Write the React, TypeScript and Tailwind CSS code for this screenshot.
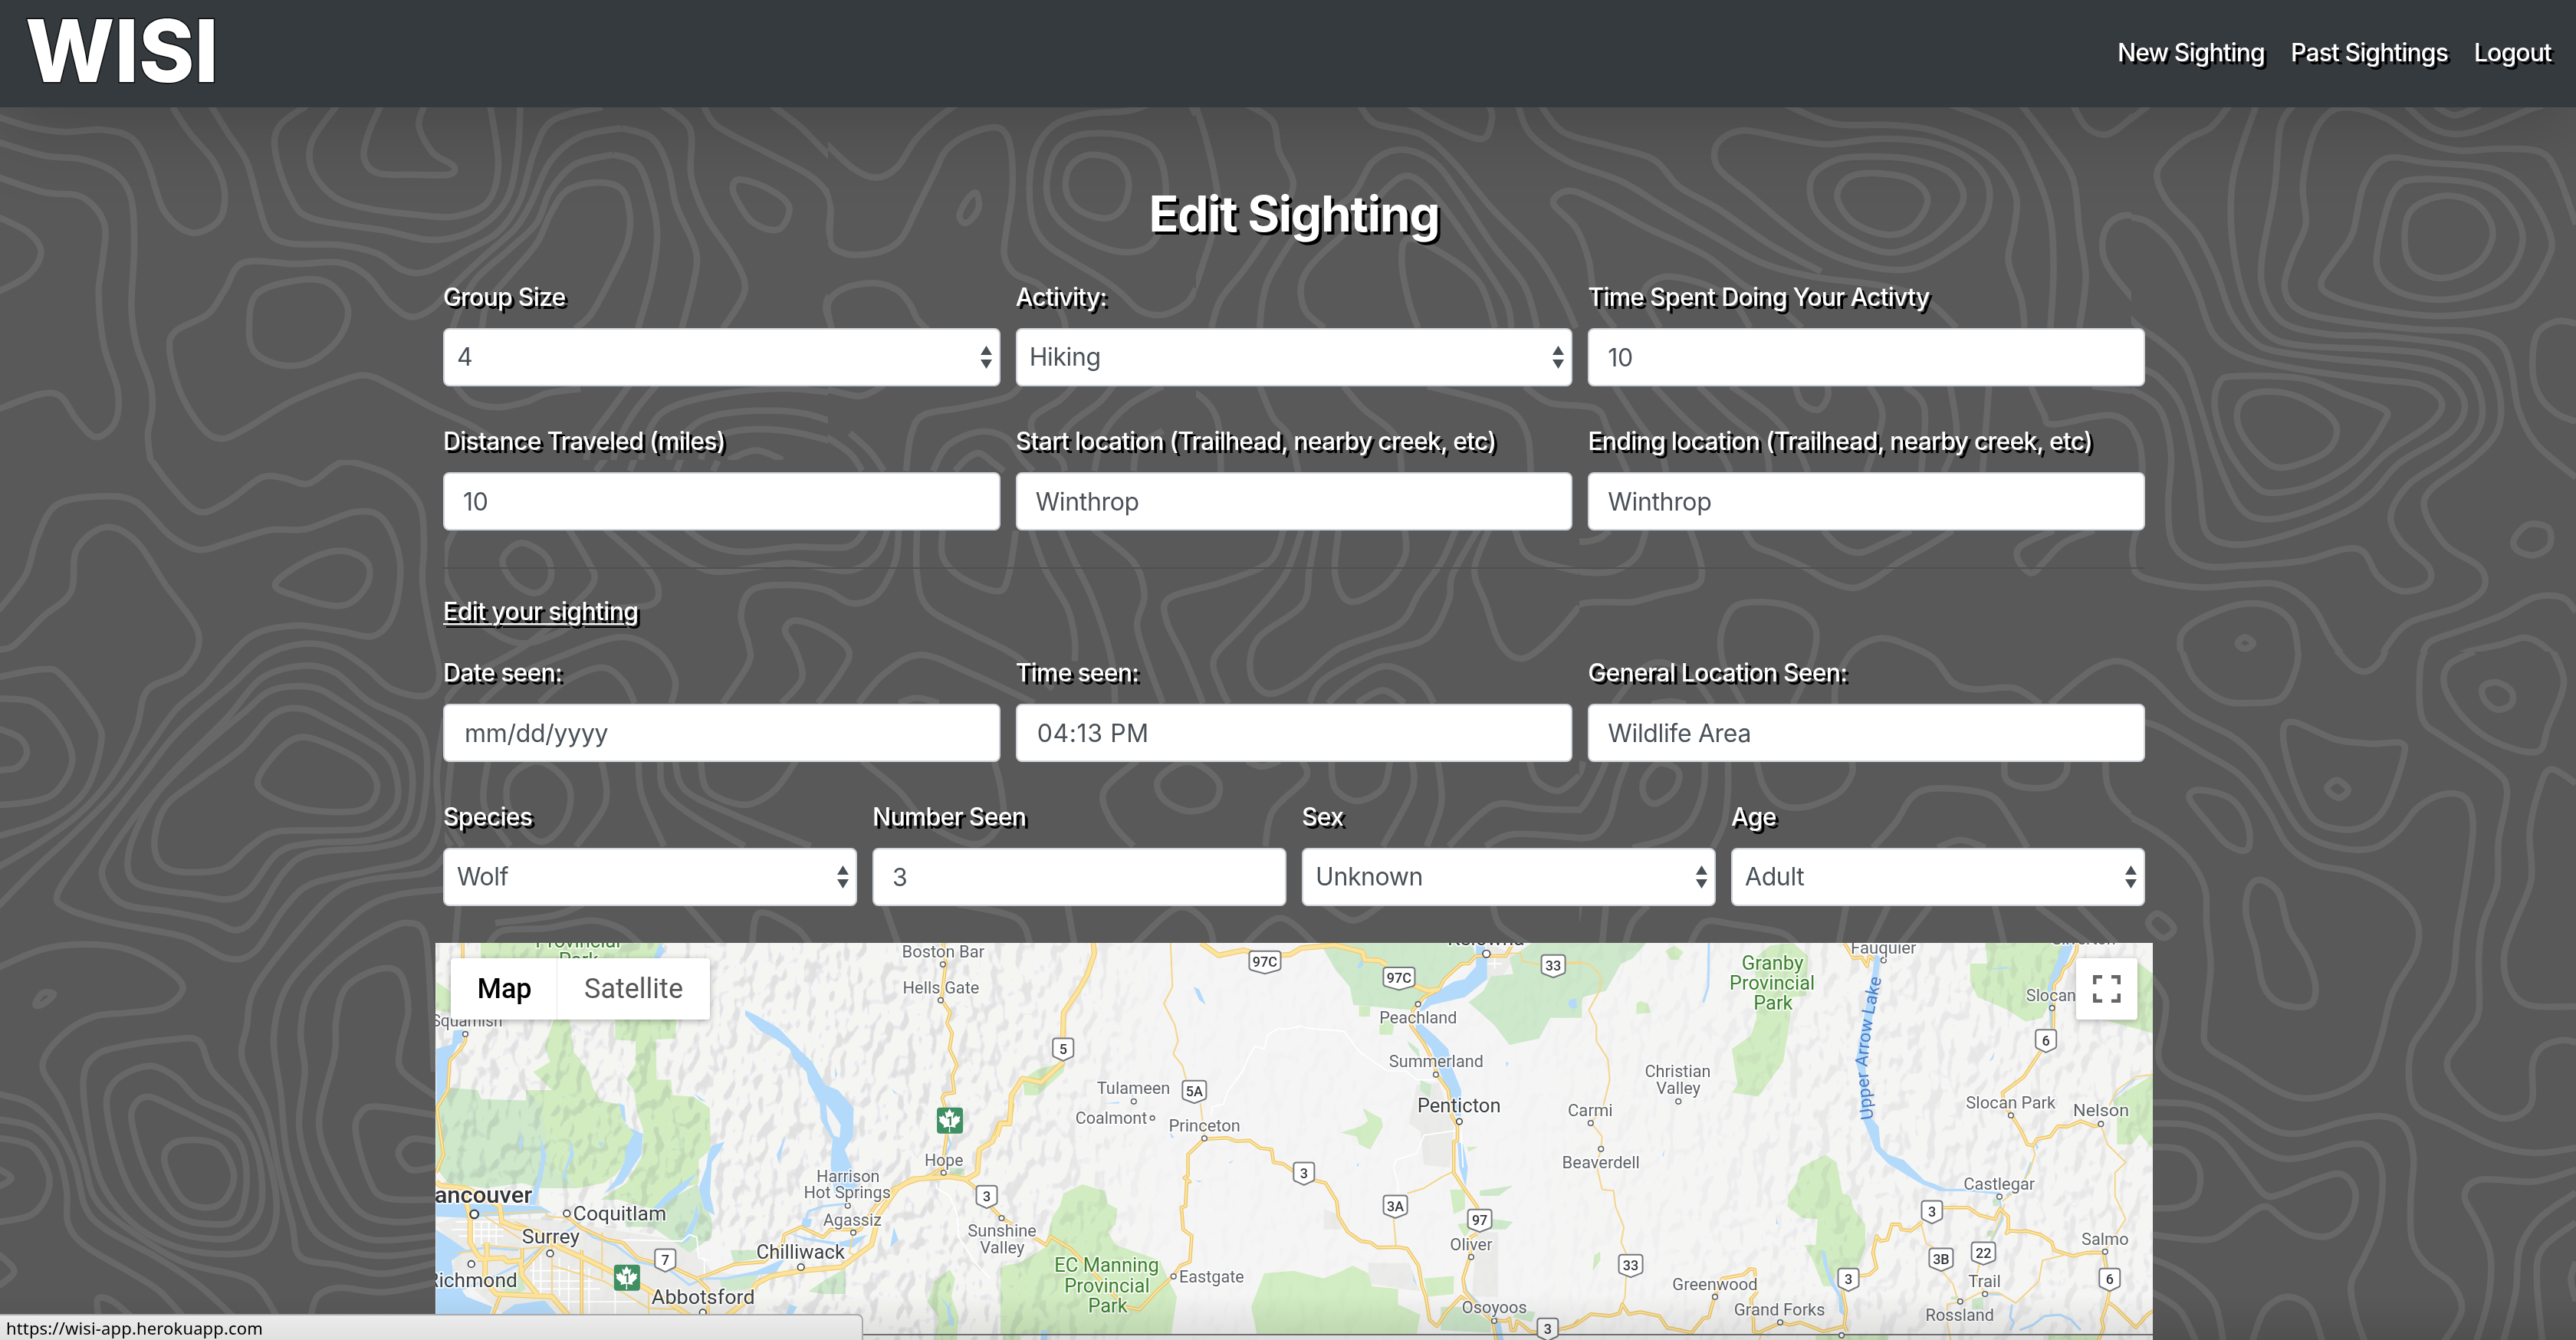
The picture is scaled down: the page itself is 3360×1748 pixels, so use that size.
import React from "react";
import { FaCanadianMapleLeaf } from "react-icons/fa";

type Pt = [number, number];

/** A sheet is a drawing board with its own units, scaled onto the page. */
type Sheet = { x: number; y: number; sx: number; sy: number };

const parse = (s: string): { pts: Pt[]; closed: boolean } => {
  const closed = s.trim().endsWith("z");
  const pts = s
    .replace("z", "")
    .trim()
    .split(/\s+/)
    .map((p) => p.split(",").map(Number) as Pt);
  return { pts, closed };
};

/** Catmull-Rom spline through the points. */
const smooth = (s: string): string => {
  const { pts, closed } = parse(s);
  const n = pts.length;
  const at = (i: number): Pt =>
    closed ? pts[(i + n) % n] : pts[Math.max(0, Math.min(n - 1, i))];
  let d = `M${pts[0][0]} ${pts[0][1]}`;
  const last = closed ? n : n - 1;
  for (let i = 0; i < last; i++) {
    const [a, b, c, e] = [at(i - 1), at(i), at(i + 1), at(i + 2)];
    d += `C${b[0] + (c[0] - a[0]) / 6} ${b[1] + (c[1] - a[1]) / 6} ${c[0] - (e[0] - b[0]) / 6} ${
      c[1] - (e[1] - b[1]) / 6
    } ${c[0]} ${c[1]}`;
  }
  return d + (closed ? "Z" : "");
};

const straight = (s: string, close = false): string => {
  const { pts } = parse(s);
  return "M" + pts.map((p) => p.join(" ")).join("L") + (close ? "Z" : "");
};

const tf = (s: Sheet) => `translate(${s.x} ${s.y}) scale(${s.sx} ${s.sy})`;

/* ---------- Topographic backdrop ---------- */

const contours: { id: string; sheet: Sheet; clip: string; lines: string[] }[] = [
  {
    id: "nw",
    sheet: { x: 0, y: 0, sx: 0.7143, sy: 0.3827 },
    clip: "M0 140H1080V600H0Z",
    lines: [
      "-10,395 60,435 120,450 185,442 240,470 270,560 300,720 350,793 400,750 410,650 390,550 345,450 315,365",
      "-10,480 80,530 150,543 210,590 240,680 245,850 240,1050 250,1180 275,1310 278,1400 270,1480 275,1570",
      "-10,600 80,655 150,672 190,760 188,880 180,1000 190,1180 215,1330 210,1440 175,1490 140,1430 110,1350 70,1345 -10,1400",
      "-10,735 50,790 75,860 50,940 -10,1000",
      "385,360 415,450 450,550 470,680 490,790 530,830 620,835 690,865 735,920 780,925 850,855 910,790 950,680 975,520 1010,410 1100,365",
      "560,360 510,430 503,520 530,670 570,745 700,785 790,818 870,780 925,680 945,520 950,360",
      "615,360 570,480 570,580 610,670 670,710 760,732 830,738 890,690 910,560 895,360",
      "695,360 672,460 665,540 690,590 760,595 820,595 828,565 790,520 765,430 775,360",
      "1210,360 1260,440 1262,600 1290,740 1340,880 1360,990 1320,1120",
      "1135,437 1060,465 1005,550 970,690 940,780 880,880 830,970 790,1050 750,1080 710,1030 670,940 620,895 540,900 445,895 410,990 380,1070 320,1130 310,1200 330,1340 370,1460 405,1495 450,1460 530,1370 620,1300 670,1280 720,1320 790,1390 860,1450 920,1520",
      "1135,437 1190,470 1220,570 1235,700 1270,850 1268,950 1245,1120",
      "1120,527 1050,560 1005,650 980,760 930,850 870,950 840,1050 825,1130",
      "1120,527 1165,560 1190,680 1200,800 1190,950 1165,1120",
      "880,1120 890,1030 930,940 980,830 1005,730 1035,650 1090,622 1135,645 1150,730 1145,830 1115,950 1080,1070 1050,1120",
      "545,955 600,965 635,1050 620,1150 570,1230 515,1245 465,1200 455,1110 470,1000z",
      "1285,360 1310,430 1400,520 1480,600 1515,680 1515,800 1540,870 1600,880",
      "1410,360 1460,430 1520,540 1570,600",
      "1350,612 1400,640 1440,700 1430,770 1405,783 1370,750 1345,680 1338,640z",
      "1568,970 1520,1000 1508,1050 1520,1120",
      "830,1310 860,1370 910,1388 960,1370 1000,1340 1060,1325",
      "1150,1310 1115,1400 1080,1490 1070,1570",
      "1200,1310 1160,1400 1130,1500 1120,1570",
      "1568,1350 1440,1325 1330,1340 1230,1385 1190,1450 1170,1568",
      "1568,1470 1470,1410 1380,1400 1290,1425 1240,1500 1220,1568",
      "1568,1530 1440,1470 1340,1470 1290,1520 1280,1568",
      "1330,1568 1380,1535 1430,1568",
    ],
  },
  {
    id: "n1",
    sheet: { x: 1080, y: 130, sx: 0.3333, sy: 0.3333 },
    clip: "M1080 140H1560V430H1080Z",
    lines: [
      "-10,170 100,270 190,305 270,265 340,160 420,80 500,20",
      "-10,350 10,430 10,560 60,600 130,607 220,590 290,540 350,420 420,280 460,200 540,140 650,108 700,140 720,230 720,370 700,500 690,610 730,680 820,720 880,780 920,850 930,900",
      "580,365 590,420 560,470 530,482 515,450 545,390z",
      "1250,20 1170,45 1020,55 900,90 830,160 795,260 790,400 810,500 860,570 960,635 1070,700 1150,760 1220,825 1310,842 1400,800 1440,740",
      "1020,133 1150,138 1250,170 1300,230 1322,340 1310,480 1260,570 1180,597 1080,580 960,520 880,440 855,340 880,220 940,155z",
      "1040,215 1130,240 1175,310 1165,400 1120,455 1060,462 980,430 935,370 935,290 975,235z",
      "15,900 0,800 60,740 180,718 270,745 320,800 350,860 390,900",
      "1420,20 1440,60",
    ],
  },
  {
    id: "n2",
    sheet: { x: 560, y: 200, sx: 0.6378, sy: 0.3316 },
    clip: "M1080 430H1560V692H580V600H1080Z",
    lines: [
      "1210,911 1180,960 1090,1000 1010,1030 985,1110 975,1250",
      "1320,911 1290,970 1235,1040 1240,1120 1290,1200 1300,1250",
      "1400,911 1370,980 1320,1050 1290,1110",
      "1500,915 1430,990 1380,1100 1360,1250",
      "1500,1090 1450,1160 1440,1250",
      "1030,1250 1060,1150 1125,1095 1180,1120 1210,1200 1235,1250",
      "1075,1250 1100,1200 1125,1180 1155,1220 1175,1250",
      "930,911 880,955 800,925 700,920",
      "860,1100 900,1170 930,1250",
      "800,1100 860,1180 885,1250",
      "340,1250 360,1200",
      "410,1250 420,1200",
      "505,1250 515,1200",
      "580,1250 590,1210",
    ],
  },
  {
    id: "ne",
    sheet: { x: 1500, y: 140, sx: 0.8418, sy: 0.3571 },
    clip: "M1560 140H2780V692H1560Z",
    lines: [
      "70,-10 85,100 100,250 105,380 85,550 60,700 20,760",
      "150,-10 190,50 200,160 222,280 200,400 150,580 110,700 95,806",
      "170,806 175,700 190,600 240,430 310,330 345,200 390,155 440,200 480,320 530,500 580,650 600,806",
      "270,806 240,740 235,640 260,550 330,400 365,300 400,250 440,320 490,480 550,700 560,806",
      "415,806 400,700 390,560 400,480 450,530 510,640 535,806",
      "325,-10 350,60 420,100 470,200 530,370 600,540 640,700 660,806",
      "400,-10 460,70 515,115 530,40 525,-10",
      "570,-10 590,100 650,200 730,270 800,370 880,480 950,570 1030,620 1130,650 1200,700 1250,806",
      "605,-10 640,90 710,140 780,190 820,290 880,370 960,500 1040,600",
      "920,85 880,130 880,220 930,320 980,420 1040,520 1110,580 1180,590 1240,520 1290,420 1300,290 1270,190 1210,130 1130,115 1050,135 990,115z",
      "1110,180 1180,190 1240,240 1260,340 1220,460 1170,520 1130,525 1070,460 1030,370 1025,260 1060,195z",
      "1120,240 1180,265 1205,340 1180,440 1140,465 1090,420 1065,330 1080,260z",
      "985,-10 1060,60 1150,65 1220,90 1300,180 1340,310 1340,430 1330,560 1350,700 1355,806",
      "1240,-10 1330,80 1370,230 1395,400 1400,600 1395,806",
      "1350,-10 1395,130 1430,260 1440,450 1450,620 1440,806",
      "1430,-10 1450,70 1480,100 1510,60 1540,-10",
      "1568,415 1510,395 1480,450 1480,560 1520,690 1568,800",
      "720,806 690,700 680,560 660,440 625,350 650,305 700,350 770,440 860,540 920,650 960,700 1010,806",
      "790,806 765,680 795,620 850,640 900,700 930,806",
      "0,1050 40,1025 80,1060 105,1150 110,1333",
      "170,1018 190,1130 215,1200 230,1333",
      "300,1018 330,1100 380,1200 390,1333",
      "430,1018 500,1060 560,1110 585,1200 590,1333",
      "580,1018 620,1080 690,1100 710,1180 740,1333",
      "720,1018 760,1160 790,1250 800,1333",
      "780,1018 830,1140 880,1250 900,1333",
      "850,1018 900,1130 950,1230 960,1333",
      "900,1018 960,1120 1000,1230 1020,1333",
      "1000,1018 1010,1080 1035,1105 1050,1060 1050,1018",
      "1115,1018 1135,1130 1110,1333",
      "1170,1018 1200,1100 1195,1333",
      "1240,1018 1250,1200 1230,1333",
      "1300,1018 1290,1333",
      "1365,1018 1385,1120 1400,1158 1490,1125 1530,1200 1535,1333",
      "1460,1018 1568,1050",
    ],
  },
  {
    id: "e1",
    sheet: { x: 2780, y: 0, sx: 0.3699, sy: 0.574 },
    clip: "M2780 140H3360V850H2780Z",
    lines: [
      "-10,275 60,240",
      "345,240 280,290 200,315 120,360 90,400 130,460 230,530 300,620 350,710 420,770 500,797 700,815 950,830 1100,855 1175,915 1130,980 950,1050 850,1120 750,1165 550,1215 380,1238 270,1215 245,1140 235,1080 180,930 100,860 40,838",
      "670,640 720,590 780,530 820,420 900,360 1050,370 1280,385 1400,440 1480,540 1460,600 1380,680 1300,703 1080,718 850,700 700,670z",
      "1568,510 1500,390 1440,345 1300,338 1150,342 1020,320 900,270 780,245 700,255 640,310 605,420 615,510 570,580 540,650 580,700 700,725 1000,748 1200,753 1300,780 1340,840 1365,930 1430,1010 1568,1085",
      "570,240 525,290 505,430 460,590 470,670 540,735 700,760 900,765 1150,785 1250,820 1300,900 1290,980 1200,1045 1060,1110 1035,1160 1110,1240 1230,1290 1240,1340 1150,1380 980,1415 900,1470 850,1525 790,1515 710,1460 640,1380 530,1330 400,1328 250,1335 100,1322 15,1300 5,1240 20,1205",
      "440,240 360,400 355,540 400,680 480,760 600,785 850,793 1050,805 1180,840 1235,910 1220,980 1120,1040 980,1100 915,1170 950,1230 1050,1290 1040,1330 950,1343 870,1310 820,1255 750,1248 600,1275 400,1285 250,1285 150,1240 130,1150 140,1030 100,930 0,885",
      "-10,493 60,505 150,560 230,660 290,760 400,810 600,840 850,862 1020,875 1095,915 1050,965 900,1030 770,1110 620,1160 470,1180 380,1150 300,1040 240,920 190,830 100,775 30,745 -10,720",
      "370,855 600,860 750,895 890,930 890,960 800,1040 650,1100 500,1120 430,1100 340,1020 295,930 310,870z",
      "480,890 580,900 690,940 725,980 680,1030 530,1063 450,1035 385,980 375,930 410,900z",
      "1100,445 1220,465 1275,530 1220,600 1100,632 1000,610 965,560 985,480z",
      "1000,408 1200,415 1310,450 1380,535 1330,620 1200,670 1050,680 920,655 865,600 890,500 930,430z",
      "970,240 1060,290 1150,305 1250,290 1400,250 1450,240",
      "1070,240 1140,262 1230,240",
      "1568,735 1500,730 1430,760 1415,840 1440,900 1500,940 1568,958",
      "1400,1192 1470,1200 1475,1240 1420,1262 1360,1250 1350,1225z",
      "590,1500 570,1420 500,1380 400,1372 280,1395 190,1430 172,1470 200,1540",
      "400,1448 430,1462 400,1475 375,1462z",
      "-10,960 30,1010 40,1080",
      "1568,1390 1520,1358 1420,1358 1300,1400 1150,1435 1050,1460 1020,1500",
      "1110,1540 1150,1490 1300,1465 1400,1450 1490,1490 1525,1540",
    ],
  },
  {
    id: "e2",
    sheet: { x: 2780, y: 850, sx: 0.3699, sy: 0.5727 },
    clip: "M2780 850H3360V1748H2780Z",
    lines: [
      "175,-10 220,60 320,110 430,117 530,105 580,40 590,-10",
      "715,-10 780,35 830,45 880,20 900,-10",
      "1040,-10 1018,40 1025,150 1100,195 1280,270 1325,320 1295,430 1290,530 1240,620 1225,700 1225,820 1180,870 1115,930 1140,980 1240,1045 1330,1063 1410,1030 1415,940 1450,900 1520,885 1568,890",
      "1210,0 1120,30 1105,80 1170,150 1280,205 1430,228 1470,170 1525,70 1480,-10",
      "1290,70 1340,90 1340,120 1290,132 1245,110 1240,80z",
      "-10,25 80,65 200,140 360,195 450,250 520,330 600,410 720,445 850,448 940,410 1010,355 1100,325 1180,335 1205,400 1180,530 1150,640 1130,750 1050,840 990,900 980,980 1010,1040 1120,1075 1280,1125 1430,1142 1568,1130",
      "45,160 110,175 240,225 380,280 480,360 550,440 650,485 800,505 940,555 1010,620 1000,690 920,780 880,880 830,960 720,1005 600,1017 500,995 380,945 270,900 258,850 280,720 265,620 260,540 200,470 100,415 -10,375",
      "570,160 720,200 850,210 950,208 960,240 900,350 830,395 740,405 640,380 570,290 535,190z",
      "725,293 765,315 730,333 690,312z",
      "240,315 350,335 410,390 410,450 340,440 270,390 205,335z",
      "455,520 520,550 555,630 620,700 650,770 620,808 520,800 465,760 440,680 405,600 415,540z",
      "95,597 150,630 110,652 60,620z",
      "70,740 120,790 115,850 95,920 140,965 300,1010 400,1050 500,1090 600,1097 750,1070 880,1058 960,1080 995,1150 985,1250 990,1340 1040,1395 1130,1440 1165,1500 1100,1575",
      "70,1027 200,1030 300,1055 420,1120 520,1153 620,1150 760,1123 840,1130 885,1190 870,1300 820,1380 775,1440 790,1510 825,1575",
      "70,1075 200,1078 310,1110 400,1180 470,1237 530,1235 640,1205 740,1190 790,1230 770,1290 700,1330 610,1325 530,1290 480,1265 430,1275 330,1325 250,1340 70,1328",
      "70,1128 180,1135 240,1180 230,1240 170,1265 70,1268",
      "70,1382 180,1415 290,1480 325,1575",
      "70,1458 170,1500 230,1575",
      "425,1575 470,1500 550,1470 630,1495 675,1575",
      "1568,1180 1420,1207 1230,1203 1175,1240 1220,1300 1265,1370 1260,1470 1215,1575",
      "1568,1232 1440,1290 1370,1360 1355,1460 1310,1575",
      "1568,1300 1450,1360 1430,1430 1450,1575",
      "1568,1390 1550,1430 1568,1480",
      "1568,300 1480,268 1440,310 1405,410 1410,520 1350,620 1315,690 1330,760 1400,805 1568,808",
    ],
  },
  {
    id: "sw",
    sheet: { x: 0, y: 600, sx: 0.3699, sy: 0.7321 },
    clip: "M0 600H580V1748H0Z",
    lines: [
      "520,-10 600,45 700,92 800,75 920,32 1000,32 1090,42 1200,5 1300,12 1400,35 1480,80 1495,150 1490,220 1520,310 1550,385 1500,420 1380,408 1290,370 1180,335 1060,328 930,350 820,400 700,450 600,500 480,580 330,680 205,770 240,800 400,825 650,850 800,888 900,875 1000,800 1100,755 1300,732 1480,710 1545,650 1540,560 1568,460",
      "-5,268 90,205 130,140 200,80 350,65 480,75 600,135 700,160 800,148 950,125 1080,123 1250,93 1350,105 1410,180 1390,270 1320,313 1200,305 1050,295 900,310 800,355 720,402 620,445 520,515 400,595 250,670 120,730 -5,795",
      "-5,338 50,330 150,280 250,235 270,160 370,120 480,145 580,220 700,310 650,375 520,410 480,480 400,560 280,630 130,685 -5,725",
      "360,740 400,690 500,620 620,550 800,460 920,390 1060,367 1180,378 1300,430 1440,465 1500,510 1500,600 1460,665 1330,690 1100,700 1000,735 900,815 830,838 740,820 600,805 430,790z",
      "450,715 480,660 560,590 720,510 860,450 960,410 1100,405 1200,430 1330,475 1430,520 1455,580 1420,650 1300,677 1100,683 980,700 880,765 800,783 700,775 550,765 470,750z",
      "545,690 580,620 700,570 850,515 960,455 1060,443 1180,470 1350,520 1400,570 1390,620 1300,655 1150,660 970,663 880,690 780,730 600,730z",
      "910,580 960,530 1050,495 1150,505 1280,540 1330,580 1290,620 1160,627 1020,615z",
      "970,222 1080,180 1200,162 1290,180 1300,215 1250,250 1180,260 1060,245z",
      "-5,387 150,373 220,385 340,465 355,510 300,590 180,640 -5,670",
      "-5,425 120,432 210,475 255,535 200,590 120,608 -5,615",
      "-5,479 70,495 95,522 60,548 -5,553",
      "-5,904 150,872 300,863 450,872 580,905 645,940 580,975 450,985 330,992 220,1025 150,1080 220,1145 290,1240 340,1320 480,1380 650,1430 850,1455 920,1480 980,1530",
      "580,1250 610,1218 700,1212 780,1225 825,1275 790,1320 720,1332 640,1315z",
      "465,1180 480,1145 530,1135 620,1155 740,1185 840,1215 870,1280 840,1350 750,1362 620,1345 520,1270z",
      "380,1170 400,1110 520,1080 620,1100 700,1140 840,1175 910,1240 920,1330 850,1380 750,1388 600,1370 460,1300z",
      "295,1100 340,1060 450,1043 600,1033 700,1035 750,1090 880,1160 950,1250 975,1340 930,1400 820,1415 640,1405 480,1365 360,1290 310,1190z",
      "1568,705 1500,735 1300,748 1180,772 1050,840 900,940 870,1010 855,1070 940,1160 980,1260 1030,1360 1060,1420 1200,1435 1350,1450 1540,1430",
      "1568,765 1400,775 1280,800 1150,860 1010,940 965,1030 990,1130 1010,1230 1060,1320 1120,1380 1250,1412 1380,1418 1540,1407",
      "1530,1090 1520,980 1500,850 1440,825 1350,840 1200,890 1090,950 1060,1020 1075,1090 1055,1190 1110,1290 1200,1360 1320,1390 1540,1382",
      "1540,1135 1420,1090 1410,1050 1440,980 1410,915 1330,908 1220,940 1185,1000 1180,1060 1125,1180 1180,1270 1270,1340 1400,1358 1540,1350",
      "1540,1168 1330,1152 1270,1165 1255,1200 1300,1280 1360,1315 1540,1318",
      "1540,1215 1450,1210 1405,1235 1450,1265 1540,1258",
      "-5,1130 100,1145 180,1180 260,1250 300,1330 370,1370 550,1420 700,1470 840,1535",
      "-5,1175 120,1190 200,1235 235,1300 240,1360 300,1400 450,1445 560,1480 660,1535",
      "-5,1208 110,1222 170,1270 165,1310 110,1345 -5,1358",
      "-5,1263 40,1280 -5,1295",
      "-5,1415 50,1445 -5,1472",
      "125,970 150,950 190,952 150,970z",
      "350,1535 345,1495 400,1500 480,1535",
      "1095,1530 1120,1490 1200,1475 1350,1483 1540,1465",
    ],
  },
  {
    id: "c1",
    sheet: { x: 560, y: 700, sx: 0.9566, sy: 0.3316 },
    clip: "M580 692H2060V1235H580Z",
    lines: [
      "35,-30 22,60 25,180 60,320 120,418 175,380 225,290 300,270 312,200 290,100 240,-30",
      "190,-30 215,90 225,170 200,260 130,430 50,560 20,655",
      "125,25 160,80 165,170 145,222 115,180 100,90z",
      "285,-30 320,40 360,110 400,138 490,105 570,135 610,70 625,-30",
      "350,-30 385,35 430,60 500,40 570,40 595,-30",
      "640,-30 635,100 610,230 575,262 540,210 490,190 440,210 425,310 435,420 435,500 400,655",
      "480,655 508,560 500,450 485,370 500,330 540,370 572,450 560,540 530,655",
      "665,-30 665,150 680,280 740,380 800,470 850,600",
      "700,-30 700,80 725,160 775,215 790,150 800,-30",
      "820,-30 840,130 870,280 880,400 880,490",
      "860,-30 880,100 905,250 930,480 935,655",
      "905,-30 960,100 975,230 965,350 980,500 1000,655",
      "1165,-30 1145,100 1080,180 1010,240 1005,330 1030,480 1055,655",
      "1190,-30 1165,160 1110,350 1070,480 1080,600 1090,655",
      "1210,-30 1200,130 1190,270 1130,400 1120,540 1145,618 1190,560 1240,440 1320,350 1350,220 1380,100 1400,-30",
      "1240,-30 1235,150 1255,255 1300,200 1330,80 1330,-30",
      "1430,-30 1395,150 1390,250 1360,400 1290,460 1220,560 1200,655",
      "1445,-30 1425,130 1440,260 1460,420 1490,480 1530,400 1568,275",
      "1480,-30 1500,80 1568,138",
      "1225,655 1260,570 1305,510 1350,570 1370,655",
      "1265,655 1300,605 1330,655",
      "585,655 620,540 670,465 740,540 825,655",
      "640,655 665,635 695,655",
      "70,655 110,560 180,470 260,395 310,450 335,560 330,655",
      "150,655 185,570 235,515 265,570 280,655",
      "10,882 8,1100 30,1218",
      "30,882 25,1100 45,1218",
      "80,882 75,1060 110,1218",
      "150,885 110,950 110,1080 150,1200 185,1120 190,980z",
      "235,882 240,1050 200,1218",
      "285,882 290,1020 320,1218",
      "315,882 320,1000 360,1100 430,1218",
      "335,882 350,1000 420,1100 520,1218",
      "370,882 380,1000 430,1055 470,1000 500,882",
      "590,882 640,1000 680,1130 745,1210 780,1120 780,1000 770,882",
      "965,882 920,1000 930,1120 960,1218",
      "1035,885 1075,960 1070,1050 1035,1080 1000,1030 995,950z",
      "1115,882 1135,905 1160,882",
      "1190,882 1195,950 1150,1080 1140,1218",
      "1230,882 1235,990 1265,1040 1300,990 1310,882",
      "1340,882 1340,1000 1300,1218",
      "1375,882 1380,1050 1360,1218",
      "1500,882 1510,960 1540,1000 1568,940",
      "1568,1075 1510,1070 1460,1050 1430,1100 1390,1218",
      "1568,1185 1480,1170 1440,1218",
      "40,1445 35,1610",
      "80,1610 100,1550 160,1540 220,1510 260,1540 290,1610",
      "210,1445 170,1490 90,1520",
      "350,1445 400,1610",
      "440,1610 450,1480 500,1540 520,1610",
      "620,1445 640,1610",
      "720,1445 800,1500 820,1610",
      "870,1445 880,1610",
      "960,1610 1020,1460 1060,1520 1070,1610",
      "1110,1610 1160,1500 1210,1610",
      "1220,1445 1260,1510 1300,1445",
      "1450,1445 1460,1530 1500,1610",
    ],
  },
  {
    id: "c2",
    sheet: { x: 2040, y: 680, sx: 0.4974, sy: 0.3508 },
    clip: "M2060 692H2780V1235H2060Z",
    lines: [
      "0,45 40,75 90,65 120,34",
      "0,175 60,190 130,185 190,130 215,34",
      "330,30 350,110 362,190 345,240 260,270 180,300 100,300 40,310 0,370",
      "475,34 500,90 560,125 630,170 690,220 760,248 820,210 880,150 950,95 1020,34",
      "680,34 720,90 775,117 840,80 910,34",
      "1285,34 1200,90 1190,140 1225,193 1260,150 1310,80 1390,34",
      "1500,34 1490,130 1510,195 1568,225",
      "600,680 640,560 662,440 650,370 600,320 520,300 450,315 420,380 410,460 425,560 470,680",
      "710,680 715,590 760,480 830,435 900,460 970,510 1020,600 1080,625 1180,620 1250,680",
      "1275,680 1340,600 1400,540 1455,520 1510,550 1568,620",
      "130,680 190,570 240,525 300,545 350,600 390,680",
      "230,680 280,670 320,680",
      "0,1000 40,940 50,893",
      "0,1110 50,1060 90,960 110,893",
      "0,1180 80,1170 120,1100 140,990 165,893",
      "250,900 300,930 290,1000 240,1050 210,1020 210,960z",
      "370,893 365,1000 330,1120 270,1180 180,1214",
      "430,893 430,1000 420,1120 390,1214",
      "505,893 525,990 570,1055 640,1060 720,1010 755,940 755,893",
      "1155,893 1160,960 1210,990 1280,985 1315,940 1320,893",
      "1420,893 1425,980 1460,1060 1568,1180",
      "810,1214 870,1120 910,1030 960,995 1060,1000 1130,1030 1180,1130 1215,1214",
      "980,1214 1040,1185 1105,1214",
      "40,1430 30,1500 0,1560",
      "110,1430 100,1575",
      "220,1430 180,1490 160,1575",
      "330,1575 370,1490 450,1500 570,1530 610,1575",
      "740,1430 720,1575",
      "850,1430 800,1575",
      "960,1430 900,1540 880,1575",
      "1130,1430 1155,1575",
      "1240,1430 1380,1575",
      "1350,1430 1450,1575",
      "1568,1460 1540,1490 1568,1540",
      "1568,750 1530,745",
    ],
  },
];

function Topography() {
  return (
    <svg className="absolute inset-0 h-[1748px] w-[3360px]" viewBox="0 0 3360 1748" aria-hidden="true">
      <defs>
        {contours.map((c) => (
          <clipPath key={c.id} id={`clip-${c.id}`}>
            <path d={c.clip} />
          </clipPath>
        ))}
      </defs>
      {contours.map((c) => (
        <g key={c.id} clipPath={`url(#clip-${c.id})`}>
          <g transform={tf(c.sheet)} fill="none" stroke="#686868" strokeWidth={8.5} strokeLinejoin="round">
            {c.lines.map((l) => (
              <path key={l} d={smooth(l)} vectorEffect="non-scaling-stroke" />
            ))}
          </g>
        </g>
      ))}
    </svg>
  );
}

/* ---------- Map ---------- */

const MAP_X = 568;
const MAP_Y = 1230;
const west: Sheet = { x: 560, y: 1220, sx: 0.4847, sy: 0.3367 };
const middle: Sheet = { x: 1300, y: 1220, sx: 0.4847, sy: 0.3367 };
const east: Sheet = { x: 2040, y: 1220, sx: 0.4974, sy: 0.3367 };

type Region = {
  sheet: Sheet;
  park: string[];
  forest: string[];
  urban: string[];
  water: string[];
  stream: string[];
  major: string[];
  mid: string[];
  thin: string[];
  white: string[];
};

const regions: Region[] = [
  {
    sheet: west,
    park: [
      "138,30 632,30 600,100 590,140 138,140",
      "18,180 60,220 55,300 18,290",
      "335,327 378,327 388,450 430,530 440,590 460,640 510,655 530,740 560,770 540,860 500,930 470,960 400,980 330,900 300,650 260,600 330,600 280,530 325,490 310,430",
      "500,327 665,327 662,400 610,405 612,560 650,560 655,620 710,625 755,670 757,830 725,870 725,960 640,1000 600,1060 510,1025 460,1025 530,960 575,850 575,750 560,690 550,600 530,560 555,500 555,410 500,405",
      "1360,1340 1400,1295 1415,1330 1405,1400 1425,1480 1420,1568 1360,1568 1370,1480 1340,1420",
      "1545,1280 1590,1270 1590,1568 1545,1568",
    ],
    forest: [
      "50,590 130,600 140,635 260,640 260,600 320,600 330,900 400,980 300,980 250,960 150,980 50,960 18,900 18,650",
      "600,1060 720,965 760,1100 760,1170 700,1230 600,1130 530,1130 520,1080",
      "810,1220 880,1220 890,1250 820,1270",
      "1020,1380 1060,1340 1120,1290 1120,1390 1060,1390",
      "780,1330 890,1310 860,1370 790,1380",
      "170,1350 240,1300 260,1370 230,1400",
      "1400,900 1440,905 1440,930 1400,925",
    ],
    urban: ["18,1120 60,1095 320,1100 700,1190 760,1300 900,1330 840,1468 200,1468 60,1300 70,1220"],
    water: [
      "850,290 880,310 940,360 1000,450 1030,490 1065,580 1100,600 1142,670 1140,780 1118,830 1150,950 1150,985 1120,1000 1090,1000 1080,890 1085,790 1055,720 1050,650 1020,570 1015,530 980,480 970,440 930,400 890,370 850,310",
      "510,650 525,660 530,740 575,770 570,850 520,960 470,1000 460,1050 470,1000 500,950 525,880 530,820 550,770 520,710",
      "760,815 795,800 780,840 760,880 755,1000 768,1085 740,1060 725,980 745,900 750,850",
      "720,920 690,980 620,1060 600,1060 640,1000 690,950",
      "720,1040 710,1100 690,1150 680,1200 700,1180 725,1090",
      "18,440 80,415 60,470 50,580 20,660",
      "65,370 90,365 90,415 60,430",
      "18,1030 100,1040 300,1050 330,1075 250,1080 100,1095 18,1090",
      "300,785 315,850 305,930 285,1045 262,1045 290,950 300,880",
      "380,790 390,850 365,920 375,960 358,930 378,850",
      "18,1140 60,1180 100,1220 60,1260 65,1330 100,1400 170,1440 160,1480 18,1480",
      "180,1480 230,1430 310,1415 350,1480",
      "780,1330 880,1300 960,1250 930,1310 850,1320",
      "960,1150 1010,1170 1100,1190 1180,1160 1140,1210 1090,1200 1010,1180",
      "1250,1130 1262,1180 1240,1210",
      "1005,1095 1030,1100 1025,1130 1000,1135",
      "970,1430 990,1440 975,1475 958,1475",
      "1375,1400 1400,1440 1412,1515 1400,1510 1392,1440",
      "960,770 945,860 940,880 935,850",
      "1245,595 1263,620 1250,610",
      "710,610 745,645 730,640",
      "240,730 252,790 245,840 240,800 248,780",
      "455,800 470,805 460,820",
      "620,30 635,60 615,100 600,100",
      "1092,510 1098,540 1092,555",
    ],
    stream: [
      "70,1380 150,1340 250,1270 300,1210 390,1130 430,1080",
      "390,1110 440,1170 500,1200 560,1265 640,1290 700,1355 740,1330 800,1330 900,1300",
      "1010,1120 1020,1070 1060,1050 1120,1040",
      "75,1230 150,1210 240,1220",
      "1395,780 1403,810 1385,870",
    ],
    major: [
      "18,955 30,970 100,980 190,1050 195,1110 230,1130 290,1150 350,1210 430,1260 500,1310 560,1350 620,1400 700,1475",
      "800,1475 850,1420 880,1350 920,1320 1000,1300 1110,1285 1190,1200 1210,1080 1260,980 1300,945 1400,935 1445,945 1475,920 1480,830 1515,800 1535,730 1560,725 1568,650",
      "95,1000 110,1100 110,1190 130,1240 150,1260 150,1340 180,1390 330,1400 375,1475",
      "130,1255 200,1250 210,1265 245,1260 250,1320 290,1390",
      "155,1190 155,1260",
    ],
    mid: [
      "90,30 90,100",
      "97,380 97,410 85,440 55,485 50,600 20,670 38,850 18,920",
      "1383,30 1390,110 1378,250 1402,300 1393,340 1407,380 1400,440 1410,470 1420,505 1407,545 1413,610 1387,615 1380,630 1395,700",
      "1393,770 1385,850 1380,900 1383,930",
      "370,1090 410,1135 480,1180 520,1190 560,1250 610,1270 660,1290 720,1330 750,1370 750,1475",
      "720,1330 760,1310 820,1275 900,1265 950,1200 955,1160 1000,1130 1060,1170 1080,1140 1140,1140",
      "1140,1150 1160,1140 1200,1050 1250,980 1350,930 1370,910",
      "1370,900 1390,930",
      "1435,940 1480,990",
      "1510,1050 1540,1095 1568,1120",
      "190,1400 170,1475",
      "250,1300 310,1205",
      "410,1220 410,1475",
      "250,1215 250,1270",
    ],
    thin: [
      "1140,1160 1130,1230 1145,1240",
      "330,1200 330,1400 370,1450",
      "465,1150 465,1330",
      "140,1200 250,1215 370,1200",
      "140,1080 310,1070 320,1090 370,1095",
      "330,1280 470,1340 590,1445 680,1450",
      "150,1090 250,1180",
      "230,1110 350,1180",
      "590,1360 590,1475",
      "1200,1040 1180,1120",
      "75,1230 130,1225",
    ],
    white: [
      "1365,960 1365,980 1400,1010 1420,1080 1425,1170 1470,1270 1510,1330",
      "280,1240 280,1400",
      "300,1240 300,1400",
      "350,1250 350,1400",
      "375,1280 375,1450",
      "430,1290 430,1468",
      "500,1370 500,1468",
      "270,1300 420,1300",
      "280,1340 440,1340",
      "290,1370 460,1370",
      "350,1420 560,1420",
      "60,1140 200,1140",
      "80,1165 200,1165",
      "120,1110 120,1200",
      "140,1110 140,1200",
      "160,1110 160,1200",
      "180,1110 180,1200",
      "70,1110 200,1110",
      "490,1190 530,1180 680,1185 700,1160 720,1170 725,1250 750,1260",
      "740,1250 740,1330",
    ],
  },
  {
    sheet: middle,
    park: [
      "180,1000 230,965 290,990 300,1040 325,1060 320,1120 300,1150 320,1200 440,1260 460,1330 485,1400 470,1545 10,1545 10,1290 60,1270 130,1210 150,1090 170,1050",
      "720,1310 800,1300 880,1330 930,1300 960,1280 1000,1310 1010,1360 1080,1370 1080,1430 1140,1470 1130,1545 700,1545 685,1440",
      "70,560 110,520 185,490 180,530 110,620 75,620",
      "925,765 980,740 1000,720 985,670 1035,710 1040,740 1005,830 975,810 970,780",
      "975,275 1005,275 1005,315 975,315",
      "1030,330 1070,330 1065,385 1030,385",
      "1220,985 1260,985 1260,1060 1230,1080",
      "1240,1120 1290,1110 1260,1170",
      "1265,820 1295,820 1270,840",
      "1150,1330 1230,1320 1230,1390 1160,1400",
    ],
    forest: [
      "870,30 1280,30 1290,90 1220,150 1190,210 1140,260 1120,290 960,270 950,200 910,130",
      "1440,30 1575,30 1575,320 1490,320 1460,400 1380,425 1340,350 1310,310 1270,260 1310,215 1330,160 1390,150 1380,90",
      "1310,1095 1390,1110 1370,1140 1310,1140",
      "1300,990 1390,970 1350,1010 1300,1010",
      "1105,410 1135,440 1140,480 1110,430",
      "1140,560 1170,580 1165,630 1140,600",
      "1195,1440 1270,1440 1330,1500 1330,1540 1195,1530",
      "1400,1450 1450,1460 1440,1500 1390,1480",
    ],
    urban: [
      "1130,580 1190,570 1230,740 1220,900 1150,890 1140,760 1110,730",
      "1290,1150 1350,1150 1350,1400 1280,1400",
      "1000,1270 1110,1270 1140,1380 1000,1350",
      "880,1060 920,1080 930,1140 880,1140",
      "1320,30 1400,80 1340,200 1320,180",
    ],
    water: [
      "1290,60 1320,90 1320,170 1260,240 1170,270 1150,290 1130,300 1140,340 1180,390 1215,440 1225,510 1250,600 1250,700 1235,700 1215,610 1190,520 1170,440 1130,380 1125,320 1160,240 1230,180 1260,170 1290,120",
      "1290,30 1310,30 1318,70 1290,90",
      "1240,800 1255,810 1268,900 1262,975 1245,900",
      "530,200 545,210 563,270 545,250",
      "970,125 980,95 988,115 975,130",
      "1340,1470 1355,1490 1365,1575 1345,1575",
      "120,1530 138,1530 135,1575 118,1575",
      "1540,250 1560,245 1560,285 1545,280",
      "285,652 330,645 330,652",
      "360,560 368,630 362,620",
      "1370,490 1378,495 1372,510",
      "625,880 638,870 628,885",
      "968,890 976,882 972,898",
      "465,760 478,785 470,785",
      "535,950 553,952 545,958",
      "1120,1310 1130,1355 1122,1340",
    ],
    stream: ["1258,1340 1265,1380 1300,1430 1330,1470"],
    major: [
      "260,30 263,70 245,150 220,215 180,300 178,400",
      "180,490 120,570 70,555 40,620 35,730 10,730 0,780",
      "550,30 597,78 665,58 690,68",
      "755,78 790,75 820,50 910,38 985,65 990,95 1030,98 1050,115",
      "1115,190 1160,215 1190,210",
    ],
    mid: [
      "1190,210 1205,170 1250,110 1270,110 1290,80 1370,80 1390,30",
      "1190,210 1150,240 1120,290 1115,350 1150,420 1175,490 1185,540 1215,600 1225,700 1240,740 1240,795 1230,800 1230,920 1255,975 1290,1045 1295,1060",
      "1293,1155 1275,1170 1275,1240 1255,1330 1260,1380 1290,1430 1330,1490 1370,1495 1380,1485 1385,1530 1395,1530 1400,1495 1415,1510 1435,1535 1460,1540",
      "1505,1530 1550,1515 1568,1490",
      "1335,1494 1345,1575",
      "558,790 620,785 645,798 680,795 710,825 740,830 745,880 770,885 800,915",
      "855,950 885,960 915,1030 920,1090 945,1150 980,1185 1005,1190 1025,1210 1080,1208 1105,1215 1135,1280 1145,1360 1155,1400 1165,1490 1185,1515 1210,1460 1250,1400 1290,1440",
      "558,790 515,850 515,930 505,940 520,955 512,950 508,1050 497,1055 502,1140 525,1165 520,1265 495,1280 475,1320 430,1380 385,1450 345,1440 300,1370 250,1290 200,1215 145,1168 133,1200 100,1170",
    ],
    thin: [
      "468,30 473,200 450,265 480,350 488,410 475,460 500,505 510,560",
      "548,650 560,790",
      "1370,70 1410,70 1415,100 1465,115",
      "1530,110 1575,108",
      "1105,1000 1150,980 1200,935 1230,915",
      "1068,1095 1075,1210",
    ],
    white: [
      "577,700 580,665 610,655 620,610 665,520 675,480 695,430 720,440 730,385 760,360 775,365 820,352 835,360 935,372 975,450 1050,525 1100,525 1130,560 1180,560",
      "1245,755 1150,775 1130,845 1075,870 1068,900 1080,960 1080,1000",
      "1250,760 1255,900",
      "1340,70 1340,130",
      "1320,110 1360,110",
    ],
  },
  {
    sheet: east,
    park: [
      "500,90 540,40 600,30 640,80 635,235 600,240 590,350 575,490 510,625 440,610 455,580 440,440 490,390 505,320",
      "1105,30 1310,30 1290,150 1280,240 1255,320 1210,335 1165,290 1085,240 1065,180 1065,110 1110,110",
      "1420,330 1545,380 1545,150 1500,100 1500,330",
      "1545,540 1490,590 1440,640 1450,700 1450,810 1490,810 1510,770 1545,830",
      "620,900 685,850 715,880 730,1000 750,1010 760,1060 790,1120 790,1210 770,1290 720,1290 700,1360 680,1360 650,1250 630,1200 660,1200 665,1100 625,1095 585,1050 590,1000 610,960",
      "190,265 200,255 220,265 228,300 190,305",
      "265,60 290,40 313,65 300,95 280,95",
      "80,1240 95,1225 95,1260 75,1300",
      "1270,1550 1400,1550 1400,1575 1270,1575",
      "660,1550 850,1550 850,1575 660,1575",
    ],
    forest: [
      "0,30 215,30 180,90 150,110 110,215 50,240 40,290 0,320",
      "1125,1025 1140,1020 1140,1050 1125,1050",
      "1110,1145 1135,1145 1125,1170 1110,1165",
      "1070,1410 1100,1400 1100,1450 1070,1450",
      "1015,1400 1030,1400 1030,1412 1015,1412",
    ],
    urban: [],
    water: [
      "815,60 830,90 828,110 815,260 800,400 790,500 795,620 800,700 825,740 830,820 850,850 890,870 945,950 975,965 1000,982 1050,982 1050,992 985,992 940,965 900,930 850,885 815,830 800,770 780,700 778,560 765,490 785,330 795,250 810,140",
      "1310,30 1338,30 1320,100 1290,180 1285,360 1275,360 1268,200 1290,110",
      "1545,545 1500,560 1450,620 1430,660 1410,720 1440,630 1490,560",
      "675,1220 685,1225 695,1300 710,1350 730,1400 735,1475 722,1460 720,1400 695,1340 680,1270",
      "10,260 30,250 35,280 15,280",
      "1120,130 1165,120 1160,130 1120,133",
      "258,850 265,830 260,860",
      "1115,490 1130,450 1125,480",
      "1235,800 1245,820 1240,835",
      "557,1095 562,1120 556,1120",
    ],
    stream: [
      "1050,987 1140,1000 1150,1100 1120,1185",
      "1225,880 1205,960 1160,1010",
      "1175,1430 1170,1480 1180,1500 1170,1530",
      "1195,1530 1230,1510 1260,1475 1300,1470 1330,1490 1355,1530",
      "1100,1390 1150,1392",
      "380,30 378,200 365,260",
      "270,1525 310,1528",
      "1420,1230 1425,1290",
    ],
    major: [],
    mid: [
      "735,30 760,90 780,85 795,120 800,80 812,95",
      "1345,30 1345,60 1325,115 1310,130 1300,170 1285,190 1283,360",
      "1250,450 1205,550 1150,610 1155,660 1175,700 1200,760 1215,810 1230,815 1240,790 1275,780 1295,740 1320,742 1355,720 1390,740 1408,735",
      "995,1055 1060,1055 1090,1085 1130,1100 1143,1060 1165,1090 1165,1140 1160,1155 1170,1145 1200,1148 1210,1145 1250,1160 1280,1190 1285,1220 1335,1243 1370,1230 1415,1230 1422,1290",
      "1430,1380 1422,1440 1410,1490 1415,1520 1400,1575",
      "1425,1420 1445,1440 1500,1520 1530,1470 1545,1455",
      "940,1110 910,1145 885,1140 880,1120 860,1120 848,1180 830,1185 820,1165 810,1230 820,1290 800,1315 775,1320",
      "730,1375 740,1450 735,1510 742,1535",
      "735,1515 680,1535 620,1500 590,1510 570,1500 510,1540 497,1535 497,1490 490,1410 505,1385 500,1295 488,1293 470,1315 415,1330 395,1400 380,1480 365,1485 335,1540 270,1520 250,1475 200,1460 170,1468 153,1430 145,1465 120,1475 70,1468 30,1510 0,1525",
    ],
    thin: [
      "0,108 40,103 70,115 95,155 95,210 65,290 85,350 85,410 115,480 120,560 100,680 70,725 100,780 97,830 85,890 100,985 130,990 135,1050 157,1130 150,1190 165,1240",
      "163,1320 160,1400 153,1430",
      "1230,815 1235,850 1220,920 1185,990 1150,1030",
      "935,1110 950,1195 970,1210",
      "990,1300 1020,1350 1030,1400 1040,1420",
      "1040,1425 1090,1385 1140,1385 1185,1425 1210,1390 1245,1340 1255,1260 1310,1240",
      "1090,1270 1080,1330 1103,1385",
      "1408,735 1425,810 1473,880 1445,920 1445,1010 1473,1100 1420,1220",
      "1155,1040 1145,1100 1120,1180",
      "1545,540 1500,548 1450,600 1430,660",
      "1040,1420 1005,1430 1005,1500 1015,1575",
      "520,1540 510,1575",
      "730,1550 730,1575",
    ],
    white: [],
  },
];

type Kind = "town" | "city" | "metro" | "park";
const labels: [Sheet, string, number, number, number, Kind][] = [
  [west, "Provincial", 285, 515, 48, "park"],
  [west, "Park", 348, 455, 122, "park"],
  [west, "Boston Bar", 1272, 1494, 86, "town"],
  [west, "Hells Gate", 1274, 1480, 225, "town"],
  [west, "Squamish", 5, 197, 353, "town"],
  [west, "Hope", 1333, 1437, 893, "town"],
  [west, "Harrison", 1042, 1212, 955, "town"],
  [west, "Hot Springs", 1008, 1242, 1020, "town"],
  [west, "Agassiz", 1060, 1217, 1125, "town"],
  [west, "Chilliwack", 880, 1118, 1252, "city"],
  [west, "Abbotsford", 598, 876, 1428, "city"],
  [west, "Coquitlam", 387, 638, 1105, "city"],
  [west, "Surrey", 249, 405, 1195, "city"],
  [west, "Vancouver", -26, 277, 1038, "metro"],
  [west, "Richmond", -8, 237, 1364, "city"],
  [west, "Sunshine", 1449, 1634, 1168, "town"],
  [west, "Valley", 1482, 1602, 1234, "town"],
  [middle, "Tulameen", 270, 467, 616, "town"],
  [middle, "Coalmont", 212, 405, 730, "town"],
  [middle, "Princeton", 463, 656, 760, "town"],
  [middle, "EC Manning", 155, 437, 1305, "park"],
  [middle, "Provincial", 182, 412, 1383, "park"],
  [middle, "Park", 246, 352, 1460, "park"],
  [middle, "Eastgate", 491, 666, 1344, "town"],
  [middle, "Peachland", 1030, 1239, 342, "town"],
  [middle, "Summerland", 1056, 1310, 512, "town"],
  [middle, "Penticton", 1132, 1357, 687, "city"],
  [middle, "Oliver", 1220, 1334, 1220, "town"],
  [middle, "Osoyoos", 1252, 1427, 1465, "town"],
  [middle, "Kelowna", 1213, 1421, 38, "city"],
  [east, "Granby", 466, 628, 133, "park"],
  [east, "Provincial", 434, 658, 210, "park"],
  [east, "Park", 497, 600, 287, "park"],
  [east, "Fauquier", 752, 924, 70, "town"],
  [east, "Silverton", 1279, 1447, 37, "town"],
  [east, "Slocan", 1212, 1343, 254, "town"],
  [east, "Christian", 212, 385, 550, "town"],
  [east, "Valley", 242, 358, 616, "town"],
  [east, "Carmi", 10, 128, 700, "town"],
  [east, "Beaverdell", -5, 199, 902, "town"],
  [east, "Slocan Park", 1054, 1289, 670, "town"],
  [east, "Nelson", 1335, 1482, 702, "town"],
  [east, "Castlegar", 1048, 1235, 985, "town"],
  [east, "Salmo", 1357, 1481, 1200, "town"],
  [east, "Trail", 1060, 1146, 1362, "town"],
  [east, "Rossland", 948, 1128, 1494, "town"],
  [east, "Grand Forks", 446, 685, 1472, "town"],
  [east, "Greenwood", 284, 508, 1374, "town"],
];

const kindStyle: Record<Kind, { size: number; fill: string; weight: number }> = {
  town: { size: 22, fill: "#5f6368", weight: 400 },
  city: { size: 26, fill: "#3c4043", weight: 400 },
  metro: { size: 29, fill: "#303236", weight: 500 },
  park: { size: 26, fill: "#3d8130", weight: 400 },
};

const dots: [Sheet, number, number, number][] = [
  [west, 1382, 113, 4],
  [west, 1376, 252, 4],
  [west, 97, 383, 4],
  [west, 1384, 920, 4],
  [west, 1126, 1048, 4],
  [west, 1141, 1152, 4],
  [west, 1000, 1286, 5],
  [west, 736, 1462, 5],
  [west, 370, 1078, 5],
  [west, 325, 1233, 5],
  [west, 121, 1081, 6],
  [west, 113, 1274, 5],
  [west, 1540, 1096, 4],
  [middle, 369, 644, 4],
  [middle, 419, 708, 3.5],
  [middle, 559, 787, 4],
  [middle, 476, 1322, 4],
  [middle, 1134, 267, 4],
  [middle, 1182, 540, 4],
  [middle, 1245, 722, 4.5],
  [middle, 1277, 1247, 4],
  [middle, 1339, 1494, 4],
  [middle, 1318, 72, 5.5],
  [east, 838, 97, 4],
  [east, 1280, 282, 4],
  [east, 300, 644, 4],
  [east, 70, 728, 4],
  [east, 97, 828, 4],
  [east, 1172, 698, 4],
  [east, 1408, 731, 4],
  [east, 1142, 1013, 4],
  [east, 1419, 1226, 4],
  [east, 1104, 1390, 4],
  [east, 1039, 1419, 4],
  [east, 567, 1500, 4],
  [east, 396, 1401, 4],
  [east, 728, 1550, 4],
];

const shields: [Sheet, string, number, number][] = [
  [west, "3", 1500, 1012],
  [west, "7", 635, 1258],
  [middle, "97C", 722, 103],
  [middle, "97C", 1083, 166],
  [middle, "33", 1498, 118],
  [middle, "5", 179, 441],
  [middle, "5A", 532, 605],
  [middle, "3", 827, 922],
  [middle, "3A", 1073, 1050],
  [middle, "97", 1300, 1104],
  [middle, "3", 1483, 1526],
  [east, "6", 1264, 408],
  [east, "3", 965, 1071],
  [east, "3B", 989, 1255],
  [east, "22", 1100, 1231],
  [east, "33", 175, 1279],
  [east, "3", 746, 1333],
  [east, "6", 1431, 1333],
];

const transCanada: [Sheet, number, number][] = [
  [west, 1401, 718],
  [west, 532, 1327],
];

const px = (s: Sheet, u: number) => s.x + u * s.sx;
const py = (s: Sheet, v: number) => s.y + v * s.sy;

function Shield({ x, y, text }: { x: number; y: number; text: string }) {
  const w = text.length === 1 ? 13.5 : text.length === 2 ? 15.5 : 20.5;
  return (
    <g transform={`translate(${x} ${y})`}>
      <path
        d={`M${-w + 4} -14H${w - 4}Q${w} -14 ${w} -10V7Q${w} 10 ${w - 4} 11L0 15.5L${-w + 4} 11Q${-w} 10 ${-w} 7V-10Q${-w} -14 ${-w + 4} -14Z`}
        fill="#fff"
        stroke="#75787c"
        strokeWidth={2}
      />
      <text y={6.5} textAnchor="middle" fontSize={18} fontWeight={500} fill="#33363a" className="font-['Roboto',sans-serif]">
        {text}
      </text>
    </g>
  );
}

function MapCanvas() {
  const s = "non-scaling-stroke" as const;
  return (
    <svg
      className="absolute inset-0 h-[518px] w-[2240px]"
      viewBox={`${MAP_X} ${MAP_Y} 2240 518`}
      aria-hidden="true"
    >
      <defs>
        <filter id="relief" x="0" y="0" width="100%" height="100%" colorInterpolationFilters="sRGB">
          <feTurbulence type="fractalNoise" baseFrequency="0.05 0.034" numOctaves={2} seed={11} result="n" />
          <feDiffuseLighting in="n" surfaceScale={9} diffuseConstant={1.08} lightingColor="#ffffff">
            <feDistantLight azimuth={225} elevation={60} />
          </feDiffuseLighting>
          <feComponentTransfer>
            <feFuncR type="discrete" tableValues="0.9 0.9 0.9 0.9 0.9 0.9 0.9 0.92 0.96 1 1" />
            <feFuncG type="discrete" tableValues="0.9 0.9 0.9 0.9 0.9 0.9 0.9 0.92 0.96 1 1" />
            <feFuncB type="discrete" tableValues="0.9 0.9 0.9 0.9 0.9 0.9 0.9 0.925 0.965 1 0.985" />
          </feComponentTransfer>
        </filter>
        <linearGradient id="reliefFade" x1="568" x2="2808" y1="0" y2="0" gradientUnits="userSpaceOnUse">
          <stop offset="0" stopColor="#fff" stopOpacity="0.75" />
          <stop offset="0.3" stopColor="#fff" stopOpacity="0.8" />
          <stop offset="0.38" stopColor="#fff" stopOpacity="0.5" />
          <stop offset="0.42" stopColor="#fff" stopOpacity="0.12" />
          <stop offset="0.62" stopColor="#fff" stopOpacity="0.08" />
          <stop offset="0.72" stopColor="#fff" stopOpacity="0.22" />
          <stop offset="0.82" stopColor="#fff" stopOpacity="0.5" />
          <stop offset="1" stopColor="#fff" stopOpacity="0.55" />
        </linearGradient>
        <mask id="reliefMask" maskUnits="userSpaceOnUse" x="568" y="1230" width="2240" height="518">
          <rect x="568" y="1230" width="2240" height="518" fill="url(#reliefFade)" />
          <path
            d="M568 1580L700 1590L930 1620L1000 1650L960 1720L568 1720Z"
            fill="#000"
            fillOpacity="0.85"
          />
        </mask>
        <path
          id="arrowLake"
          d={`M${px(east, 812)} ${py(east, 712)}Q${px(east, 800)} ${py(east, 600)} ${px(east, 796)} ${py(east, 500)}Q${px(east, 806)} ${py(east, 320)} ${px(east, 836)} ${py(east, 150)}`}
        />
      </defs>
      <rect x="568" y="1230" width="2240" height="518" fill="#f5f5f5" />
      {regions.map((r, i) => (
        <g key={i} transform={tf(r.sheet)}>
          {r.urban.map((d) => (
            <path key={d} d={straight(d, true)} fill="#ebebea" />
          ))}
          {r.forest.map((d) => (
            <path key={d} d={straight(d, true)} fill="#cee8cc" />
          ))}
          {r.park.map((d) => (
            <path key={d} d={straight(d, true)} fill="#d2ecc3" />
          ))}
        </g>
      ))}
      <g mask="url(#reliefMask)" className="mix-blend-multiply">
        <rect x="568" y="1230" width="2240" height="518" filter="url(#relief)" />
      </g>
      {regions.map((r, i) => (
        <g key={i} transform={tf(r.sheet)} fill="none" strokeLinejoin="round">
          {r.water.map((d) => (
            <path key={d} d={straight(d, true)} fill="#b3dafb" />
          ))}
          {r.stream.map((d) => (
            <path key={d} d={straight(d)} stroke="#b3dafb" strokeWidth={3} vectorEffect={s} />
          ))}
          {r.white.map((d) => (
            <path key={d} d={straight(d)} stroke="#ffffff" strokeWidth={1.8} vectorEffect={s} />
          ))}
          {r.thin.map((d) => (
            <path key={d} d={straight(d)} stroke="#f5d58a" strokeWidth={2} vectorEffect={s} />
          ))}
          {r.mid.map((d) => (
            <path key={d} d={straight(d)} stroke="#eec566" strokeWidth={4.6} vectorEffect={s} />
          ))}
          {r.major.map((d) => (
            <path key={d} d={straight(d)} stroke="#f0cb72" strokeWidth={7} vectorEffect={s} />
          ))}
          {r.mid.map((d) => (
            <path key={d} d={straight(d)} stroke="#fde9ab" strokeWidth={1.8} vectorEffect={s} />
          ))}
          {r.major.map((d) => (
            <path key={d} d={straight(d)} stroke="#fde49c" strokeWidth={4.6} vectorEffect={s} />
          ))}
        </g>
      ))}
      <path
        transform={tf(west)}
        d="M1068 655L1082 680L1107 735L1104 785L1088 775L1072 720Z"
        fill="#f3f3f3"
      />
      <path d="M568 1741H2808" stroke="#77787a" strokeWidth={2} />
      <text fontSize={23} fill="#4a7cc4" className="font-['Roboto',sans-serif]">
        <textPath href="#arrowLake" textLength={186} lengthAdjust="spacing">
          Upper Arrow Lake
        </textPath>
      </text>
      {dots.map(([sh, u, v, r], i) => (
        <circle
          key={i}
          cx={px(sh, u)}
          cy={py(sh, v)}
          r={r - 0.7}
          fill="#fff"
          stroke={r > 4.2 ? "#3c4043" : "#5f6368"}
          strokeWidth={r > 5.9 ? 2.4 : 1.6}
        />
      ))}
      {labels.map(([sh, text, a, b, v, kind], i) => (
        <text
          key={i}
          x={px(sh, a)}
          y={py(sh, v)}
          textLength={(b - a) * sh.sx}
          lengthAdjust="spacingAndGlyphs"
          fontSize={kindStyle[kind].size}
          fontWeight={kindStyle[kind].weight}
          fill={kindStyle[kind].fill}
          stroke="#ffffff"
          strokeOpacity={0.75}
          strokeWidth={4}
          paintOrder="stroke"
          strokeLinejoin="round"
          className="font-['Roboto',sans-serif]"
        >
          {text}
        </text>
      ))}
      {shields.map(([sh, text, u, v], i) => (
        <Shield key={i} x={px(sh, u)} y={py(sh, v)} text={text} />
      ))}
      {transCanada.map(([sh, u, v], i) => (
        <g key={i} transform={`translate(${px(sh, u)} ${py(sh, v)})`}>
          <rect x={-17} y={-17} width={34} height={34} rx={4} fill="#3f8f63" />
          <FaCanadianMapleLeaf x={-16} y={-15.5} width={32} height={31} size={31} color="#ffffff" />
          <text y={6} textAnchor="middle" fontSize={16} fontWeight={700} fill="#2f7d52" className="font-['Roboto',sans-serif]">
            1
          </text>
        </g>
      ))}
    </svg>
  );
}

function SightingMap() {
  return (
    <section className="relative h-[518px] w-[2240px] overflow-hidden font-['Roboto',sans-serif]">
      <MapCanvas />
      <div className="absolute top-[20px] left-[20px] flex h-[80px] rounded-[4px] bg-white text-[36px] leading-[80px] shadow-[0_2px_8px_rgba(0,0,0,0.3)]">
        <button className="w-[139px] border-r border-[#e6e6e6] pl-[2px] text-center font-medium text-black">Map</button>
        <button className="w-[199px] text-center text-[#565656]">Satellite</button>
      </div>
      <button
        aria-label="Toggle fullscreen view"
        className="absolute top-[20px] right-[20px] flex h-[80px] w-[80px] items-center justify-center rounded-[4px] bg-white shadow-[0_2px_8px_rgba(0,0,0,0.3)]"
      >
        <svg className="h-[36px] w-[36px]" viewBox="0 0 36 36" fill="none" stroke="#666" strokeWidth={4.4}>
          <path d="M2.2 12V2.2H12M24 2.2H33.8V12M33.8 24V33.8H24M12 33.8H2.2V24" />
        </svg>
      </button>
    </section>
  );
}

/* ---------- Form ---------- */

type FieldProps = { label: string; value: string; kind?: "select" | "date" | "time" };

const inputTone = {
  text: "px-[24px] tracking-[-0.35px]",
  date: "px-[26px] tracking-[-0.3px]",
  time: "px-[26px] tracking-[0.6px]",
};

function Field({ label, value, kind }: FieldProps) {
  return (
    <label className="flex min-w-0 flex-1 flex-col gap-4">
      <span className="text-[32px] leading-[48px] font-[470] tracking-[-0.8px] whitespace-nowrap text-white [text-shadow:4px_4px_0_#000]">
        {label}
      </span>
      {kind === "select" ? (
        <span className="flex h-[76px] items-center justify-between rounded-[8px] border-2 border-[#ced4da] bg-white pr-[9px] pl-[16px]">
          <select
            defaultValue={value}
            className="h-full flex-1 appearance-none bg-transparent text-[32px] tracking-[-0.4px] text-[#495057] outline-none"
          >
            <option>{value}</option>
          </select>
          <svg className="h-[30px] w-[15px]" viewBox="0 0 15 30" fill="#495057">
            <path d="M7.5 0L15 12H0ZM0 18H15L7.5 30Z" />
          </svg>
        </span>
      ) : (
        <input
          defaultValue={value}
          className={`h-[76px] w-full rounded-[8px] border-2 border-[#ced4da] bg-white text-[32px] text-[#495057] outline-none ${
            inputTone[kind ?? "text"]
          }`}
        />
      )}
    </label>
  );
}

function Row({ fields }: { fields: FieldProps[] }) {
  return (
    <div className="mx-[10px] mb-12 flex gap-[20px]">
      {fields.map((f) => (
        <Field key={f.label} {...f} />
      ))}
    </div>
  );
}

function Logo() {
  return (
    <svg className="h-[140px] w-[256px]" viewBox="0 0 256 140" aria-label="WISI">
      <text
        x={1}
        y={107}
        textLength={252}
        lengthAdjust="spacingAndGlyphs"
        fill="#fff"
        stroke="#0b0c0d"
        strokeWidth={3}
        paintOrder="stroke"
        fontWeight={800}
        fontSize={113}
        className="font-['Inter',sans-serif]"
      >
        WISI
      </text>
    </svg>
  );
}

export default function App() {
  return (
    <div className="relative h-[1748px] w-[3360px] overflow-hidden bg-[#595959] font-['Inter',sans-serif]">
      <Topography />
      <div className="relative flex h-full flex-col">
        <header className="flex h-[140px] shrink-0 justify-between bg-[#353a3f] pr-[32px] pl-[32px] shadow-[0_32px_96px_rgba(0,0,0,0.175)]">
          <Logo />
          <nav className="flex h-[137px] items-center gap-[34px] text-[32px] font-medium tracking-[-0.95px] text-white [text-shadow:4px_4px_0_#000]">
            <a>New Sighting</a>
            <a>Past Sightings</a>
            <a>Logout</a>
          </nav>
        </header>
        <main className="ml-[568px] w-[2240px] pt-[101px]">
          <h1 className="mb-[47px] text-center text-[64px] leading-[76px] font-bold tracking-[-1.3px] text-white [text-shadow:4px_4px_0_#000]">
            Edit Sighting
          </h1>
          <Row
            fields={[
              { label: "Group Size", value: "4", kind: "select" },
              { label: "Activity:", value: "Hiking", kind: "select" },
              { label: "Time Spent Doing Your Activty", value: "10" },
            ]}
          />
          <Row
            fields={[
              { label: "Distance Traveled (miles)", value: "10" },
              { label: "Start location (Trailhead, nearby creek, etc)", value: "Winthrop" },
              { label: "Ending location (Trailhead, nearby creek, etc)", value: "Winthrop" },
            ]}
          />
          <hr className="mx-[10px] mb-8 border-0 border-t-2 border-[#505050]" />
          <p className="mx-[10px] mb-8 text-[32px] leading-[48px] font-[470] tracking-[-0.65px] text-white underline decoration-2 underline-offset-4 [text-shadow:4px_4px_0_#000]">
            Edit your sighting
          </p>
          <Row
            fields={[
              { label: "Date seen:", value: "mm/dd/yyyy", kind: "date" },
              { label: "Time seen:", value: "04:13 PM", kind: "time" },
              { label: "General Location Seen:", value: "Wildlife Area" },
            ]}
          />
          <Row
            fields={[
              { label: "Species", value: "Wolf", kind: "select" },
              { label: "Number Seen", value: "3" },
              { label: "Sex", value: "Unknown", kind: "select" },
              { label: "Age", value: "Adult", kind: "select" },
            ]}
          />
          <SightingMap />
        </main>
      </div>
      <div className="pointer-events-none absolute inset-x-0 bottom-0 h-[60px] bg-gradient-to-b from-transparent to-black/10" />
      <div className="absolute bottom-0 left-0 flex h-[34px] w-[1126px] items-center rounded-tr-[8px] border-t-2 border-r-2 border-[#a9a9a9] bg-gradient-to-b from-[#ececec] to-[#e0e0e0] pl-[8px] font-['Noto_Sans',sans-serif] text-[22px] leading-none tracking-[0.15px] text-black">
        https://wisi-app.herokuapp.com
      </div>
    </div>
  );
}
